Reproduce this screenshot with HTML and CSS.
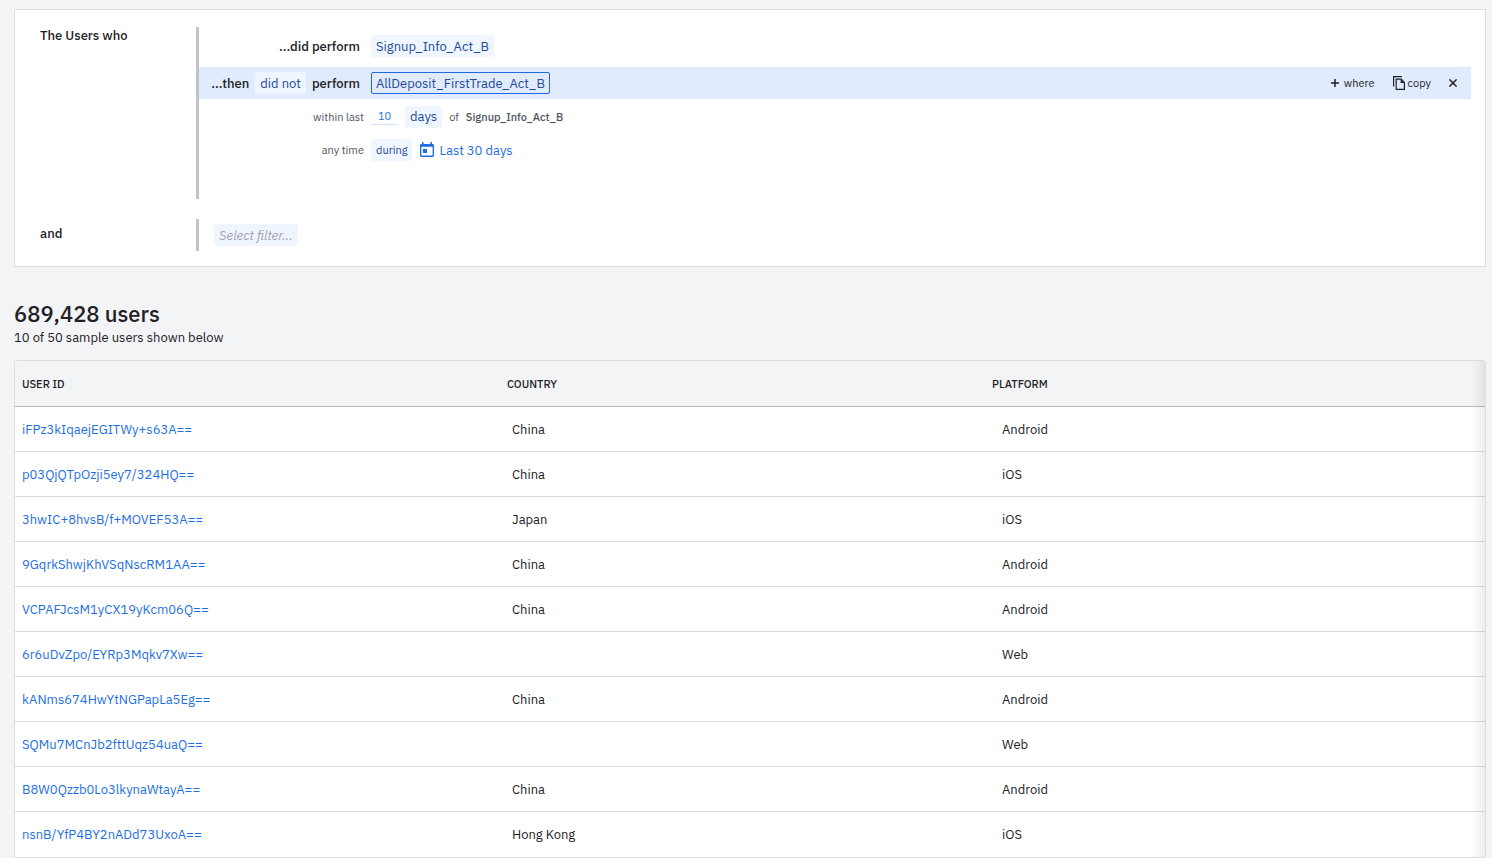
FILE: index.html
```html
<!DOCTYPE html>
<html lang="en">
    <head>
        <meta charset="utf-8">
        <title>Users</title>
        <link rel="stylesheet" href="styles.css">
    </head>
    <body>
        <section class="query">
            <div class="group">
                <h2>The Users who</h2>
                <div class="clauses">
                    <div class="clause event">
                        <div class="lead">...did perform</div>
                        <button type="button" class="chip">Signup_Info_Act_B</button>
                    </div>
                    <div class="clause event selected">
                        <div class="lead">
                            ...then
                            <button type="button" class="chip">did not</button>
                            perform
                        </div>
                        <button type="button" class="chip active">AllDeposit_FirstTrade_Act_B</button>
                        <div class="actions">
                            <button type="button">
                                <svg width="8" height="8" viewBox="0 0 8 8"><path d="M4 0v8M0 4h8" stroke="currentColor" stroke-width="1.5"/></svg>
                                where
                            </button>
                            <button type="button" class="copy">
                                <svg width="12" height="14" viewBox="0 0 12 14" fill="none" stroke="currentColor" stroke-width="1.2"><path d="M.6 10.5V.6h8.4"/><path d="M3.2 3.2h5l3.2 3.2v7H3.2z"/><path d="M7.6 3.2v3.8h3.8z" fill="currentColor" stroke="none"/></svg>
                                copy
                            </button>
                            <button type="button" class="remove" aria-label="Remove">
                                <svg width="8" height="8" viewBox="0 0 8 8"><path d="M.4.4l7.2 7.2M7.6.4L.4 7.6" stroke="currentColor" stroke-width="1.5"/></svg>
                            </button>
                        </div>
                    </div>
                    <div class="clause detail">
                        <label class="lead" for="within">within last</label>
                        <input class="amount" id="within" type="text" value="10">
                        <button type="button" class="chip unit">days</button>
                        <span>of</span>
                        <strong>Signup_Info_Act_B</strong>
                    </div>
                    <div class="clause detail">
                        <div class="lead">any time</div>
                        <button type="button" class="chip">during</button>
                        <button type="button" class="range">
                            <svg width="14" height="16" viewBox="0 0 14 16"><path fill="currentColor" fill-rule="evenodd" d="M2 0h1.500v2h7V0H12v2h.6A1.400 1.400 0 0 1 14 3.400v10.200a1.400 1.400 0 0 1-1.400 1.400H1.400A1.400 1.400 0 0 1 0 13.600V3.400A1.400 1.400 0 0 1 1.400 2H2zM1.400 4.700v8.900h11.200V4.700zM3 7h4v4H3z"/></svg>
                            Last 30 days
                        </button>
                    </div>
                </div>
            </div>
            <div class="group and">
                <h2>and</h2>
                <div class="clauses">
                    <button type="button" class="chip empty">Select filter...</button>
                </div>
            </div>
        </section>

        <header>
            <h1>689,428 users</h1>
            <p>10 of 50 sample users shown below</p>
        </header>

        <div class="results">
            <table>
                <thead>
                    <tr><th>User ID</th><th>Country</th><th>Platform</th></tr>
                </thead>
                <tbody>
                    <tr><td><a href="#">iFPz3kIqaejEGITWy+s63A==</a></td><td>China</td><td>Android</td></tr>
                    <tr><td><a href="#">p03QjQTpOzji5ey7/324HQ==</a></td><td>China</td><td>iOS</td></tr>
                    <tr><td><a href="#">3hwIC+8hvsB/f+MOVEF53A==</a></td><td>Japan</td><td>iOS</td></tr>
                    <tr><td><a href="#">9GqrkShwjKhVSqNscRM1AA==</a></td><td>China</td><td>Android</td></tr>
                    <tr><td><a href="#">VCPAFJcsM1yCX19yKcm06Q==</a></td><td>China</td><td>Android</td></tr>
                    <tr><td><a href="#">6r6uDvZpo/EYRp3Mqkv7Xw==</a></td><td></td><td>Web</td></tr>
                    <tr><td><a href="#">kANms674HwYtNGPapLa5Eg==</a></td><td>China</td><td>Android</td></tr>
                    <tr><td><a href="#">SQMu7MCnJb2fttUqz54uaQ==</a></td><td></td><td>Web</td></tr>
                    <tr><td><a href="#">B8W0Qzzb0Lo3lkynaWtayA==</a></td><td>China</td><td>Android</td></tr>
                    <tr><td><a href="#">nsnB/YfP4BY2nADd73UxoA==</a></td><td>Hong Kong</td><td>iOS</td></tr>
                </tbody>
            </table>
        </div>
    </body>
</html>
```

FILE: styles.css
```css
* {
    box-sizing: border-box;
}
body {
    margin: 0;
    padding: 9px 6px 0 14px;
    background: #f3f4f6;
    color: #1f2126;
    font: 13px/17px "IBM Plex Sans", Roboto, sans-serif;
}
button, input {
    margin: 0;
    padding: 0;
    border: 0;
    background: none;
    color: inherit;
    font: inherit;
}
button {
    cursor: pointer;
    white-space: nowrap;
}
svg {
    flex: none;
}

.query {
    padding: 17px 14px 15px 25px;
    border: 1px solid #dcdde1;
    background: #fff;
}
.group {
    display: flex;
}
.group h2 {
    flex: none;
    width: 156px;
    margin: 0;
    font-size: 13px;
    font-weight: 500;
}
.clauses {
    flex: 1;
    padding: 3px 0 33px;
    border-left: 3px solid #c2c3ca;
}
.group.and {
    margin-top: 20px;
}
.group.and h2 {
    padding-top: 6px;
}
.group.and .clauses {
    padding: 5px 15px;
}

.clause {
    display: flex;
    align-items: center;
    height: 32px;
}
.clause .lead {
    display: flex;
    flex: none;
    align-items: center;
    justify-content: flex-end;
    gap: 6px;
    width: 172px;
    padding-right: 11px;
    font-weight: 500;
}
.clause.event + .clause {
    margin-top: 5px;
}
.clause.selected {
    background: #e0ebfd;
}
.clause.selected + .detail {
    margin-top: 2px;
}
.clause.detail {
    gap: 7px;
    color: #50535e;
    font-size: 11px;
}
.clause.detail + .detail {
    margin-top: 1px;
}
.clause.detail .lead {
    width: 165px;
    padding-right: 0;
    font-weight: 400;
}
.clause strong {
    font-weight: 500;
}

.chip {
    height: 22px;
    padding: 0 4px;
    border: 1px solid transparent;
    border-radius: 2px;
    background: #f0f6ff;
    color: #224a99;
    font-weight: 400;
}
.chip.active {
    border-color: #1e6ae1;
    background: #e0ebfd;
}
.chip.unit {
    font-size: 13px;
    line-height: 16px;
}
.chip.empty {
    display: block;
    color: #a0a2ae;
    font-style: italic;
}
.amount {
    width: 27px;
    height: 16px;
    border-bottom: 1px solid #d3e5fd;
    color: #1e6fe3;
    text-align: center;
}
.range {
    display: flex;
    align-items: center;
    gap: 5px;
    margin-left: 1px;
    color: #1e6fe3;
    font-size: 13px;
}

.actions {
    display: flex;
    align-items: center;
    gap: 18px;
    margin-left: auto;
    padding-right: 14px;
    font-size: 11px;
    line-height: 16px;
}
.actions button {
    display: flex;
    align-items: center;
    gap: 5px;
}
.actions .copy {
    gap: 3px;
}

header {
    margin: 35px 0 14px;
}
h1 {
    margin: 0;
    font-size: 22px;
    font-weight: 500;
    line-height: 24px;
}
header p {
    margin: 3px 0 0;
}

.results {
    position: relative;
    overflow: hidden;
    border: 1px solid #dcdde1;
    border-radius: 3px;
    background: #fff;
}
.results::after {
    content: "";
    position: absolute;
    top: 0;
    right: 0;
    bottom: 0;
    width: 14px;
    background: linear-gradient(to right, rgba(0, 0, 0, 0), rgba(0, 0, 0, 0.07));
    pointer-events: none;
}
table, thead, tbody {
    display: block;
}
tr {
    display: grid;
    grid-template-columns: repeat(3, 1fr);
    border-bottom: 1px solid #dcdde1;
}
tbody tr:last-child {
    border-bottom-color: transparent;
}
th, td {
    padding: 14px 7px 13px;
    text-align: left;
}
th {
    padding: 15px 7px 14px;
    font-size: 11px;
    font-weight: 500;
    line-height: 16px;
    text-transform: uppercase;
}
thead tr {
    padding-right: 15px;
    border-bottom-color: #b9bbc3;
    background: #f3f4f6;
}
a {
    color: #1e6fe3;
    text-decoration: none;
}
```
